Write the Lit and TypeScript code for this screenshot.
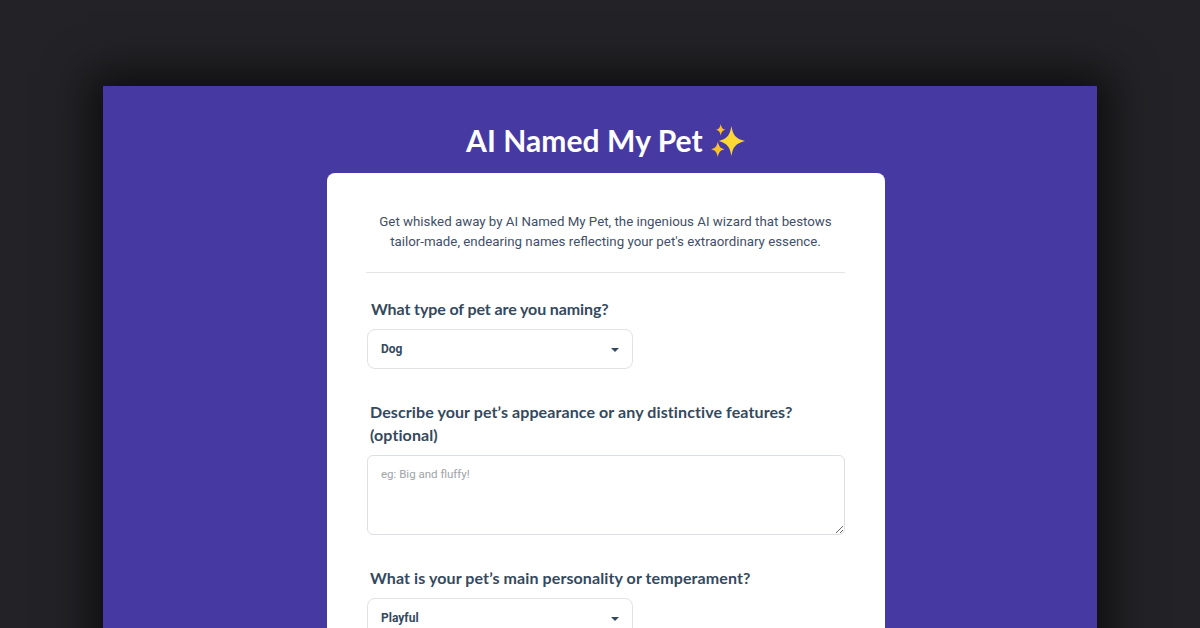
import { LitElement, html, css } from "lit";
import { customElement } from "lit/decorators.js";

@customElement("app-root")
export class AppRoot extends LitElement {
  static styles = css`
    :host { display: block; height: 628px; overflow: hidden; background: #232327; font-family: Roboto, sans-serif; }
    .window { margin: 86px 103px 0; height: 700px; background: #4739a2; box-shadow: 0 0 40px 14px rgba(0,0,0,.6); padding-top: 33px; box-sizing: border-box; }
    h1 { margin: 0 0 0 363px; height: 54px; display: flex; align-items: flex-start; gap: 8px; color: #fff; font: 700 30px/42px Lato, sans-serif; letter-spacing: .07px; }
    h1 svg { margin-top: 5px; }
    .card { width: 558px; margin-left: 224px; background: #fff; border-radius: 8px; padding: 39px 40px 0 39px; box-sizing: border-box; height: 600px; }
    .intro { margin: 0; padding: 0 0 20px; border-bottom: 1px solid #e2e4e8; text-align: center; color: #3f4f69; font-size: 13.3px; line-height: 20px; }
    label { display: block; padding-left: 4px; color: #34495e; font: 700 16px/23px Lato, sans-serif; letter-spacing: .1px; }
    .first { margin-top: 24px; letter-spacing: -.1px; padding-left: 5px; }
    .q2, .q3 { margin-top: 31px; }
    .sel { position: relative; width: 266px; margin: 9px 0 0 1px; }
    select { appearance: none; display: block; width: 100%; height: 40px; border: 1px solid #e0e2e6; border-radius: 8px; background: #fff; padding: 0 13px; color: #34495e; font: 700 12px Roboto, sans-serif; }
    .caret { position: absolute; right: 14px; top: 19px; width: 0; height: 0; border: 4px solid transparent; border-top: 4px solid #34495e; border-bottom: 0; }
    textarea { display: block; box-sizing: border-box; width: 478px; height: 80px; margin: 9px 0 0 1px; border: 1px solid #dcdfe3; border-radius: 6px; padding: 10px 13px; font: 400 11.5px/17px Roboto, sans-serif; outline: none; }
    textarea::placeholder { color: #a0a3a8; }
  `;
  render() {
    return html`<div class="window">
      <h1>AI Named My Pet
        <svg width="35" height="33" viewBox="0 0 36 34">
          <path fill="#fdd835" d="M21 2 C22.5 11 25 15 35 17.5 C25 20 22.5 24 21 33 C19.5 24 17 20 8 17.5 C17 15 19.5 11 21 2Z"/>
          <path fill="#fbc02d" d="M10 0 C10.8 4 11.8 5.2 15 6 C11.8 6.8 10.8 8 10 12 C9.2 8 8.2 6.8 5 6 C8.2 5.2 9.2 4 10 0Z"/>
          <path fill="#fbc02d" d="M7 18 C8 23 9.5 25 14 26 C9.5 27 8 29 7 34 C6 29 4.5 27 0 26 C4.5 25 6 23 7 18Z"/>
        </svg>
      </h1>
      <div class="card">
        <p class="intro">Get whisked away by AI Named My Pet, the ingenious AI wizard that bestows tailor-made, endearing names reflecting your pet's extraordinary essence.</p>
        <label class="first">What type of pet are you naming?</label>
        <div class="sel"><select><option>Dog</option></select><span class="caret"></span></div>
        <label class="q2">Describe your pet’s appearance or any distinctive features? (optional)</label>
        <textarea placeholder="eg: Big and fluffy!"></textarea>
        <label class="q3">What is your pet’s main personality or temperament?</label>
        <div class="sel"><select><option>Playful</option></select><span class="caret"></span></div>
      </div>
    </div>`;
  }
}
